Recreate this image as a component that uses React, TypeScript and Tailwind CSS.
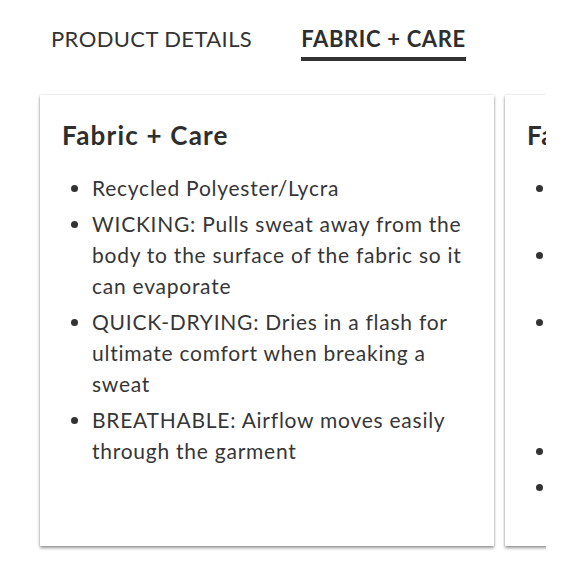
import React from "react";

const card1 = [
  "Recycled Polyester/Lycra",
  "WICKING: Pulls sweat away from the body to the surface of the fabric so it can evaporate",
  "QUICK-DRYING: Dries in a flash for ultimate comfort when breaking a sweat",
  "BREATHABLE: Airflow moves easily through the garment",
];

const card2 = [
  "Soft, lightweight and stretchy jersey fabric blend",
  "Moisture-wicking fabric keeps you cool and dry",
  "FOUR-WAY STRETCH: Moves with you in every direction so you can run, jump, twist and lift with total freedom and comfort all day long",
  "Machine wash cold",
  "Imported",
];

function Card({ title, items }: { title: string; items: string[] }) {
  return (
    <div className="shrink-0 w-[454px] h-[451px] bg-white shadow-[0_2px_3px_rgba(0,0,0,0.4),0_0_2px_rgba(0,0,0,0.15)] pl-[22px] pr-[16px] pt-[24px]">
      <h2 className="text-[26px] leading-[32px] font-bold text-[#2e2e2e] tracking-[1.2px]">{title}</h2>
      <ul className="mt-[21px] flex flex-col gap-[5px] pl-[30px] list-disc">
        {items.map((t) => (
          <li key={t} className="text-[21px] leading-[31px] text-[#363636] tracking-[0.75px] marker:text-[#333]">
            {t}
          </li>
        ))}
      </ul>
    </div>
  );
}

export default function App() {
  return (
    <div className="w-[579px] h-[580px] bg-white font-['Lato','Noto_Sans',sans-serif] overflow-hidden">
      <div className="flex items-start pl-[51px] pt-[25px] gap-[49px]">
        <div className="text-[22px] leading-[28px] text-[#333] tracking-[0.4px]">PRODUCT DETAILS</div>
        <div className="flex flex-col">
          <div className="text-[22px] leading-[28px] font-bold text-[#2e2e2e] tracking-[0.65px]">FABRIC + CARE</div>
          <div className="mt-[4px] h-[4px] bg-[#333]" />
        </div>
      </div>
      <div className="w-[546px] overflow-hidden pt-[34px] pb-[10px] pl-[40px]">
        <div className="flex gap-[11px]">
          <Card title="Fabric + Care" items={card1} />
          <Card title="Fabric + Care" items={card2} />
        </div>
      </div>
    </div>
  );
}
